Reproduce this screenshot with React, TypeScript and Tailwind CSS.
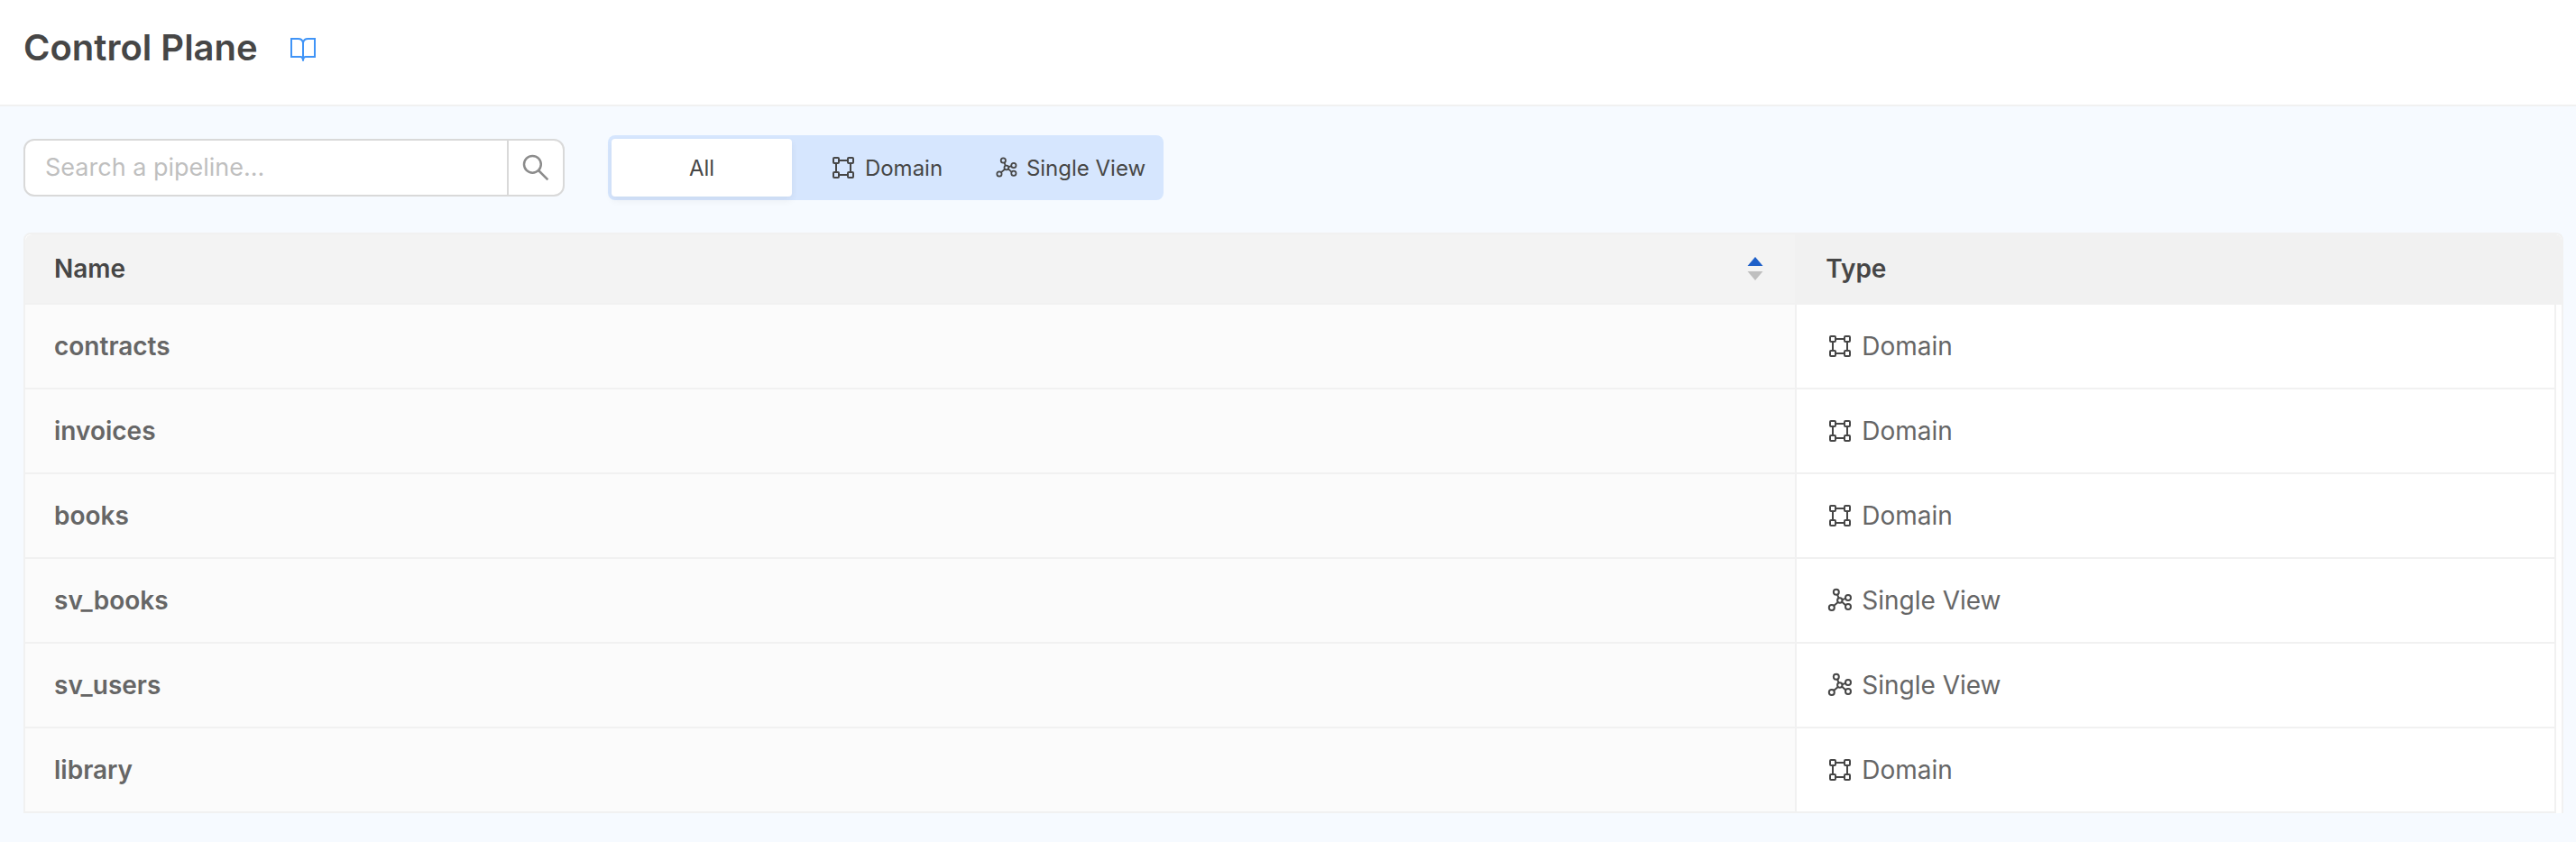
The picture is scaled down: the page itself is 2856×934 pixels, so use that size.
import React, { useState } from "react";

type Kind = "Domain" | "Single View";
type Pipeline = { name: string; kind: Kind };

const pipelines: Pipeline[] = [
  { name: "contracts", kind: "Domain" },
  { name: "invoices", kind: "Domain" },
  { name: "books", kind: "Domain" },
  { name: "sv_books", kind: "Single View" },
  { name: "sv_users", kind: "Single View" },
  { name: "library", kind: "Domain" },
];

function BookIcon() {
  return (
    <svg className="size-8" viewBox="0 0 32 32" fill="none" stroke="currentColor" strokeWidth="2" aria-hidden="true">
      <path d="M16 8.500C15.500 5.500 13.200 4 10.500 4H3V24H13C15 24 16 25 16 28.700V8.500ZM16 8.500C16.500 5.500 18.800 4 21.500 4H29V24H19C17 24 16 25 16 28.700" />
    </svg>
  );
}

function SearchIcon() {
  return (
    <svg className="size-8" viewBox="0 0 32 32" fill="none" stroke="currentColor" strokeWidth="2.500" aria-hidden="true">
      <circle cx="12.400" cy="12.300" r="9.400" />
      <path d="M19 19L29.400 29.300" />
    </svg>
  );
}

function DomainIcon() {
  return (
    <svg className="size-8 shrink-0" viewBox="0 0 32 32" fill="none" stroke="currentColor" strokeWidth="2" aria-hidden="true">
      <rect x="5" y="5" width="6" height="6" rx="1" />
      <rect x="21" y="5" width="6" height="6" rx="1" />
      <rect x="5" y="21" width="6" height="6" rx="1" />
      <rect x="21" y="21" width="6" height="6" rx="1" />
      <path d="M12 8H20M12 24H20M8 12V20M24 12V20" />
    </svg>
  );
}

function SingleViewIcon({ className }: { className: string }) {
  return (
    <svg className={className} viewBox="0 0 32 32" fill="none" stroke="currentColor" strokeWidth="2" aria-hidden="true">
      <circle cx="11.800" cy="6.800" r="3" />
      <circle cx="25" cy="13" r="3" />
      <circle cx="25" cy="23" r="3" />
      <circle cx="6.800" cy="24" r="3" />
      <circle cx="15.800" cy="16" r="2.700" />
      <path d="M13.200 9.800L14.600 13.500M18.300 15.200L22.100 13.900M18 17.400L22.400 21.500M13.800 18L9.100 21.900" />
    </svg>
  );
}

function SortIcon() {
  return (
    <svg className="h-[26px] w-[18px]" viewBox="0 0 18 26" aria-hidden="true">
      <path d="M9 0L17.500 10H0.500Z" fill="#1d5fc8" />
      <path d="M0.500 16H17.500L9 26Z" fill="#bfbfbf" />
    </svg>
  );
}

const tabs = ["All", "Domain", "Single View"] as const;

export default function App() {
  const [tab, setTab] = useState<(typeof tabs)[number]>("All");
  const [query, setQuery] = useState("");

  const rows = pipelines.filter(
    (p) => (tab === "All" || p.kind === tab) && p.name.includes(query.toLowerCase()),
  );

  return (
    <div className="min-h-screen bg-[#f6faff] font-['Inter',sans-serif] text-[#464646]">
      <header className="flex h-[118px] items-center gap-[34px] border-b-2 border-[#f1f1f1] bg-white px-[26px] pb-2.5">
        <h1 className="text-[40px] leading-[60px] font-semibold">Control Plane</h1>
        <a href="#docs" aria-label="Documentation" className="mt-1 text-[#4094f7]">
          <BookIcon />
        </a>
      </header>

      <main className="flex flex-col gap-9 pt-8 pr-3.5 pl-[26px]">
        <div className="flex items-center gap-12">
          <form
            role="search"
            onSubmit={(e) => e.preventDefault()}
            className="flex h-16 w-[600px] overflow-hidden rounded-xl border-2 border-[#d9d9d9] bg-white"
          >
            <input
              type="text"
              aria-label="Search a pipeline"
              placeholder="Search a pipeline..."
              value={query}
              onChange={(e) => setQuery(e.target.value)}
              className="min-w-0 flex-1 px-[22px] text-[27px] outline-none placeholder:text-[#bfbfbf]"
            />
            <button
              type="submit"
              aria-label="Search"
              className="flex w-[62px] items-center justify-center border-l-2 border-[#d9d9d9] text-[#8c8c8c]"
            >
              <SearchIcon />
            </button>
          </form>

          <div role="group" aria-label="Pipeline type" className="flex gap-1 rounded-lg bg-[#d6e6fe] p-1">
            {tabs.map((t) => (
              <button
                key={t}
                type="button"
                aria-pressed={tab === t}
                onClick={() => setTab(t)}
                className={
                  tab === t
                    ? "flex h-16 w-[200px] items-center justify-center gap-2 rounded bg-white text-2xl leading-[33px] whitespace-nowrap shadow-[0_4px_8px_rgba(0,0,0,0.06)]"
                    : "flex h-16 w-[200px] items-center justify-center gap-2 rounded text-2xl leading-[33px] whitespace-nowrap"
                }
              >
                {t === "Domain" && <DomainIcon />}
                {t === "Single View" && <SingleViewIcon className="size-7 shrink-0" />}
                {t}
              </button>
            ))}
          </div>
        </div>

        <div className="flex overflow-hidden rounded-t-lg border-x-2 border-t-2 border-[#f1f1f1] bg-white">
          <table className="flex-1 table-fixed border-separate border-spacing-0 text-left text-[28px] leading-[44px]">
            <thead>
              <tr className="h-[78px]">
                <th
                  aria-sort="ascending"
                  className="w-[70%] rounded-tl-lg border-r-2 border-b-2 border-[#f1f1f1] bg-[#f3f3f3] px-8 font-semibold"
                >
                  <button type="button" className="flex w-full items-center justify-between pr-[3px]">
                    Name
                    <SortIcon />
                  </button>
                </th>
                <th className="border-b-2 border-[#f1f1f1] bg-[#f1f1f1] px-8 font-semibold">Type</th>
              </tr>
            </thead>
            <tbody>
              {rows.map((p) => (
                <tr key={p.name} className="h-[94px] text-[#666]">
                  <th scope="row" className="border-r-2 border-b-2 border-[#f1f1f1] bg-[#fbfbfb] px-8 font-semibold">
                    {p.name}
                  </th>
                  <td className="border-r-2 border-b-2 border-[#f1f1f1] px-8">
                    <div className="flex items-center gap-2">
                      <span className="text-[#464646]">
                        {p.kind === "Domain" ? <DomainIcon /> : <SingleViewIcon className="size-8 shrink-0" />}
                      </span>
                      {p.kind}
                    </div>
                  </td>
                </tr>
              ))}
            </tbody>
          </table>
          <div className="w-1.5 shrink-0">
            <div className="h-[78px] rounded-tr-lg bg-[#f1f1f1]" />
          </div>
        </div>
      </main>
    </div>
  );
}
